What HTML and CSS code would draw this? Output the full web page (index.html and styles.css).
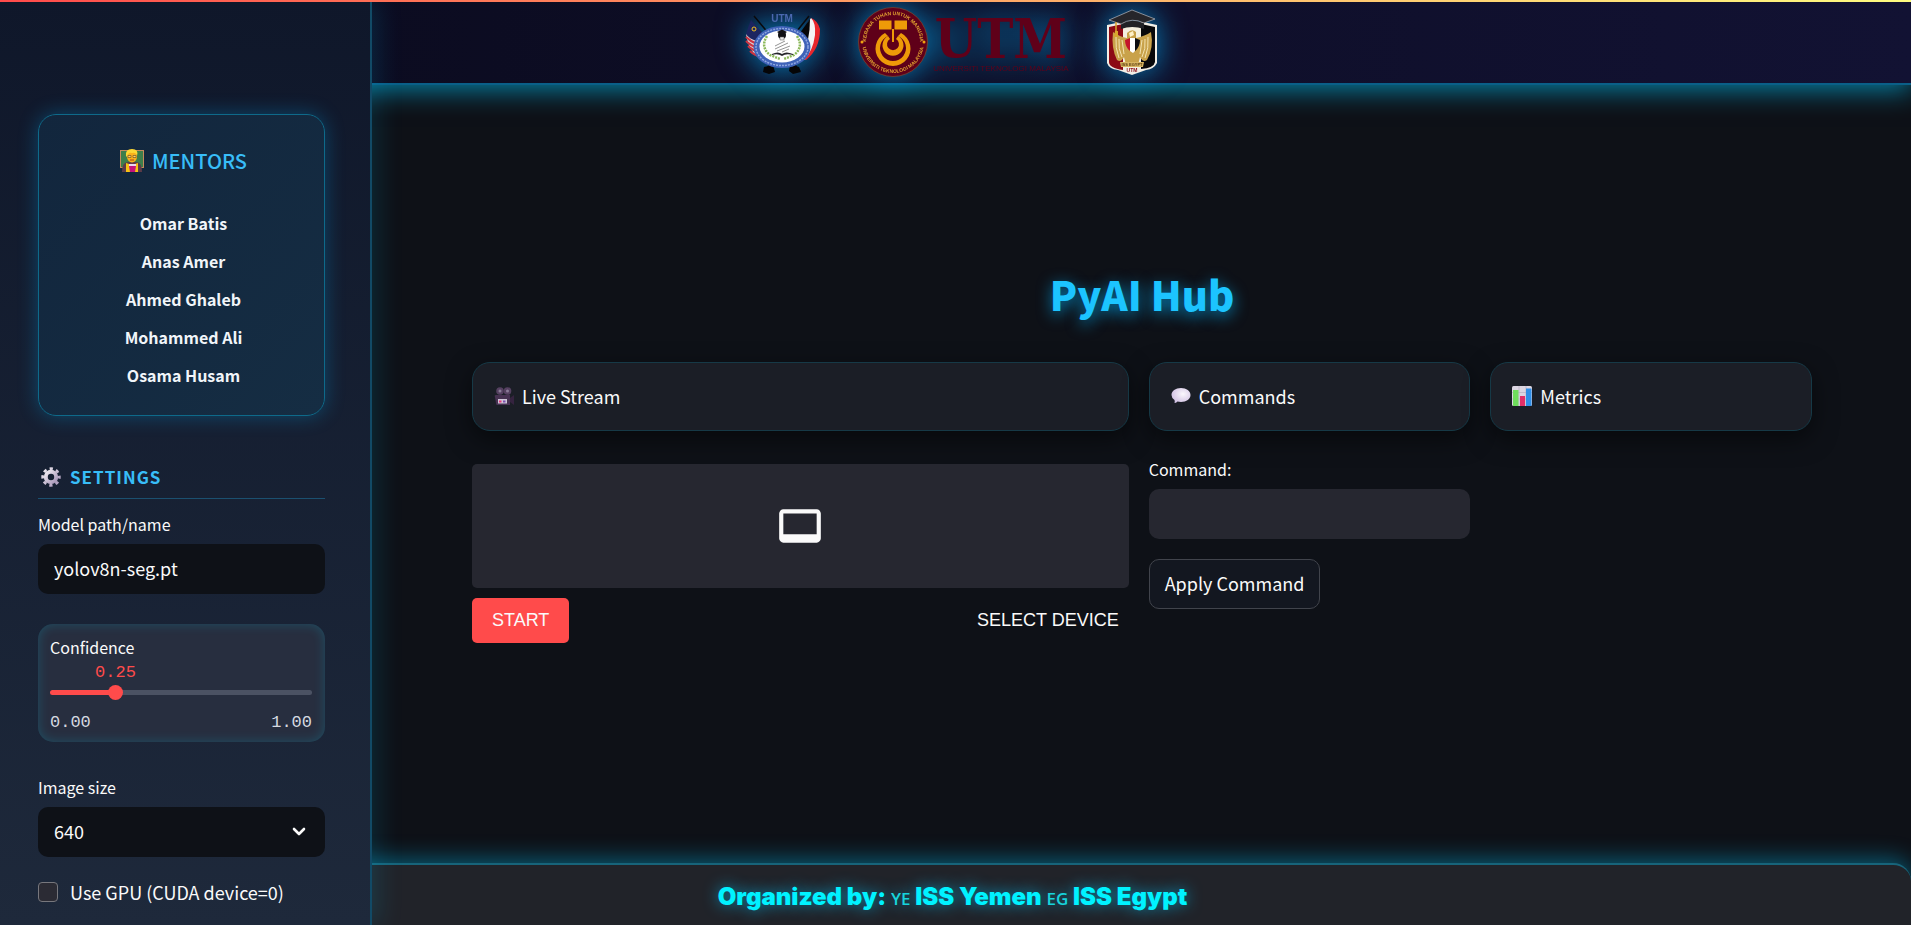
FILE: index.html
```
<!DOCTYPE html>
<html lang="en">

	<head>
		<meta charset="UTF-8">
		<title>PyAI Hub</title>
		<link rel="stylesheet" href="styles.css">
	</head>

	<body>
		<div class="stripe"></div>

		<header class="header">
			<svg class="logo" width="78" height="66" viewBox="0 0 78 66" role="img" aria-label="ISS Yemen UTM">
				<!-- flag poles -->
				<path d="M11 7 L57 62 M66 7 L22 62" stroke="#0a0a0c" stroke-width="1.5" />
				<path d="M21 58 L30 56 L32 63 L26 65 L20 63 Z M47 56 L56 58 L58 63 L50 65 L46 62 Z" fill="#050507" />
				<!-- left flag -->
				<path d="M8 11 Q14 18 19 23 L14 36 Q6 30 3 25 Q5 18 8 11 Z" fill="#1c2560" />
				<path d="M3 25 Q6 30 14 32 L19 51 Q6 44 3 25 Z" fill="#d8cdd4" />
				<path d="M3 28 Q8 33 14 35 M3 32 Q8 37 15 39 M5 37 Q9 41 16 43 M7 42 Q11 46 18 48" stroke="#cf3340" stroke-width="2" fill="none" />
				<circle cx="11" cy="20" r="2" fill="none" stroke="#f0c020" stroke-width="1" />
				<!-- right flag -->
				<path d="M68 9 Q75 12 77 20 Q77 40 63 51 L60 51 Q71 34 68 9 Z" fill="#e8262c" />
				<path d="M68 9 Q73 14 72 26 Q70 42 61 51 L57 48 Q65 32 64 15 Z" fill="#f4f4f4" />
				<path d="M67 10 Q67 33 59 46 L54 28 Z" fill="#060608" />
				<ellipse cx="39" cy="38" rx="28.500" ry="21" fill="#3f62b8" />
				<ellipse cx="39" cy="38" rx="26" ry="18.500" fill="none" stroke="#8ea7df" stroke-width="1.500" stroke-dasharray="2 1" />
				<ellipse cx="39" cy="37.500" rx="22.500" ry="16" fill="#fff" />
				<path d="M24 27 Q17 38 27 46 L37 50 M54 27 Q61 38 51 46 L41 50" fill="none" stroke="#8bb85a" stroke-width="2.500" stroke-dasharray="2 1" />
				<circle cx="39" cy="26" r="4" fill="#101014" />
				<path d="M34 23 L39 20.500 L44 23 L39 26 Z" fill="#101014" />
				<path d="M37 28 h4 v3 h-4 Z" fill="#e8e8e8" stroke="#555" stroke-width="0.500" />
				<path d="M32 37 L42 32 M32 40 L45 34 M34 42 L47 37 M39 43 L46 40" stroke="#777" stroke-width="0.800" />
				<path d="M29 45 Q35 42 39 45 Q43 42 50 45 L50 46 Q43 44 39 47 Q35 44 29 46 Z" fill="#26262c" />
				<text class="badge-text" x="39" y="13" text-anchor="middle">UTM</text>
			</svg>

			<svg class="logo" width="212" height="72" viewBox="0 0 212 72" role="img" aria-label="Universiti Teknologi Malaysia">
				<defs>
					<path id="ringTop" d="M9 36 A27 27 0 0 1 63 36" />
					<path id="ringBottom" d="M5 36 A31 31 0 0 0 67 36" />
				</defs>
				<circle cx="36" cy="36" r="34.500" fill="#5f0019" stroke="#8a4327" stroke-width="0.700" />
				<text class="ring-text" text-anchor="middle">
					<textPath href="#ringTop" startOffset="50%">KERANA TUHAN UNTUK MANUSIA</textPath>
				</text>
				<text class="ring-text" text-anchor="middle">
					<textPath href="#ringBottom" startOffset="50%">UNIVERSITI TEKNOLOGI MALAYSIA</textPath>
				</text>
				<circle cx="5" cy="36" r="1.500" fill="#f0a010" />
				<circle cx="67" cy="36" r="1.500" fill="#f0a010" />
				<path d="M22 14.500 h28 v9 h-28 Z" fill="#ee9a08" />
				<path d="M36 14 v19" stroke="#5f0019" stroke-width="3" />
				<path d="M36 23 v13" stroke="#ee9a08" stroke-width="2" />
				<path d="M28 27 A17.500 17.500 0 1 0 44 27 L41 30 A13 13 0 1 1 31 30 Z" fill="#ee9a08" />
				<path d="M31 30 A10.500 10.500 0 1 0 41 30 L39 33 A6 6 0 1 1 33 33 Z" fill="#ee9a08" />
				<text class="utm" x="144" y="52" text-anchor="middle">UTM</text>
				<text class="utm-sub" x="144" y="65" text-anchor="middle">UNIVERSITI TEKNOLOGI MALAYSIA</text>
			</svg>

			<svg class="logo" width="54" height="68" viewBox="0 0 54 68" role="img" aria-label="ISS Egypt UTM">
				<path d="M2 17 L16 14 H38 L52 17 V55 Q49 61 41 62 L27 67 L13 62 Q4 61 2 55 Z" fill="#f2eee6" />
				<path d="M4 19 L18 16 V62 Q4 60 4 54 Z" fill="#8c0a14" />
				<path d="M36 16 L50 19 V54 Q49 60 36 61 Z" fill="#08080a" />
				<path d="M18 18 h18 v42 h-18 Z" fill="#f4efdf" />
				<!-- eagle -->
				<path d="M22 25 Q27 20 31 24 L31 30 Q40 28 46 24 Q49 40 42 52 Q38 55 35 49 L33 57 H21 L19 49 Q16 55 12 52 Q6 40 8 24 Q15 29 22 30 Z" fill="#c9a24a" />
				<path d="M11 29 Q10 40 14 50 M14 31 Q13 41 17 49 M17 32 L19 46 M43 29 Q44 40 40 50 M40 31 Q41 41 37 49 M37 32 L35 46" stroke="#f3e3b0" stroke-width="1" fill="none" />
				<path d="M20 32 L25 30 V43 Q20 39 20 32 Z" fill="#c4142a" />
				<path d="M25 30 h5 v13 l-2 2 l-3 -2 Z" fill="#fff" />
				<path d="M30 30 L35 32 Q35 39 30 43 Z" fill="#0c0c10" />
				<path d="M15 54 H39 L38 59 H16 Z" fill="#d9b662" />
				<path d="M24 25 L28 23 L29 27 L25 29 Z" fill="#fff1c8" />
				<text class="crest-text" x="27" y="58" text-anchor="middle">ISS EGYPT</text>
				<text class="crest-utm" x="27" y="64" text-anchor="middle">UTM</text>
				<!-- graduation cap -->
				<path d="M16 15 Q27 10 39 15 V21 Q27 17 16 21 Z" fill="#222226" />
				<path d="M4 12 L27 2 L50 11 L39 15 Q27 9 16 16 Z" fill="#26262b" stroke="#b8b8bd" stroke-width="0.700" />
				<path d="M11 14 V26" stroke="#d9a52c" stroke-width="1.500" />
				<path d="M10 23 h3 v6 h-4 Z" fill="#d9a52c" />
			</svg>
		</header>

		<aside class="sidebar">
			<section class="mentors">
				<h3 class="mentors-title">
					<svg width="24" height="24" viewBox="0 0 24 24" aria-hidden="true">
						<path d="M0 1 h24 v18 h-24 Z" fill="#c58a5c" />
						<path d="M1 2 h22 v16 h-22 Z" fill="#3d7e4b" />
						<path d="M2 23 Q2 13 8 13 H16 Q22 13 22 23 Z" fill="#5c3b48" />
						<path d="M6 23 V14 L12 16 L18 14 V23 Z" fill="#f8c312" />
						<path d="M9 17 h7 l-1 6 h-5 Z" fill="#c4147c" />
						<path d="M9 15 h7 v2 h-7 Z" fill="#ead8f0" />
						<ellipse cx="12" cy="7.500" rx="5" ry="6" fill="#f9b11b" />
						<path d="M6 7 Q5 0 12 0 Q19 0 17 7 Q16 3 12 4 Q8 3 7 8 Z" fill="#fdd835" />
						<path d="M8 6.500 h3 v2 h-3 Z M13 6.500 h3 v2 h-3 Z" fill="#ffd869" stroke="#7a5528" stroke-width="0.700" />
						<path d="M10 11 h4" stroke="#a8421c" stroke-width="1" />
					</svg>
					MENTORS
				</h3>
				<ul class="mentors-list">
					<li>Omar Batis</li>
					<li>Anas Amer</li>
					<li>Ahmed Ghaleb</li>
					<li>Mohammed Ali</li>
					<li>Osama Husam</li>
				</ul>
			</section>

			<h3 class="settings-title">
				<svg width="20" height="20" viewBox="0 0 20 20" aria-hidden="true">
					<defs>
						<linearGradient id="gear" x1="0" y1="0" x2="1" y2="1">
							<stop offset="0" stop-color="#f0ecf2" />
							<stop offset="1" stop-color="#a795b8" />
						</linearGradient>
					</defs>
					<g stroke="url(#gear)" fill="none">
						<circle cx="10" cy="10" r="5.200" stroke-width="4" />
						<circle cx="10" cy="10" r="8.300" stroke-width="2.800" stroke-dasharray="3.300 3.219" stroke-dashoffset="1.650" />
					</g>
				</svg>
				SETTINGS
			</h3>

			<div class="field">
				<label for="model">Model path/name</label>
				<input class="control" type="text" id="model" value="yolov8n-seg.pt">
			</div>

			<div class="slider">
				<label for="confidence">Confidence</label>
				<div class="slider-value"><output for="confidence">0.25</output></div>
				<div class="track">
					<input type="range" id="confidence" min="0" max="1" step="0.01" value="0.25">
				</div>
				<div class="slider-range"><span>0.00</span><span>1.00</span></div>
			</div>

			<div class="field">
				<label for="size">Image size</label>
				<div class="select-wrap">
					<select class="control" id="size">
						<option>320</option>
						<option selected>640</option>
						<option>1280</option>
					</select>
					<svg class="chevron" width="14" height="10" viewBox="0 0 14 10" aria-hidden="true">
						<path d="M2 2 L7 7 L12 2" fill="none" stroke="#fafafa" stroke-width="2.600" stroke-linecap="round" stroke-linejoin="round" />
					</svg>
				</div>
			</div>

			<label class="check">
				<input type="checkbox">
				Use GPU (CUDA device=0)
			</label>
		</aside>

		<main class="main">
			<h1 class="title">PyAI Hub</h1>

			<div class="row">
				<section class="col wide">
					<h2 class="card">
						<svg width="20" height="20" viewBox="0 0 20 20" aria-hidden="true">
							<circle cx="6" cy="5" r="3.800" fill="#554060" />
							<circle cx="13.500" cy="5" r="3.800" fill="#554060" />
							<circle cx="6" cy="5" r="1.500" fill="#8b7c98" />
							<circle cx="13.500" cy="5" r="1.500" fill="#8b7c98" />
							<path d="M1 11 Q0 9 2 9 H16 V19 H3 Q2 19 2 17 Z" fill="#473252" />
							<path d="M16 12 L20 9 V19 L16 16 Z" fill="#35233f" />
							<path d="M4 13 h9 v4.500 h-9 Z" fill="#cfc6d8" />
							<path d="M5 14.500 h2.500 v2 h-2.500 Z" fill="#e8387a" />
							<path d="M9 14.500 h2.500 v2 h-2.500 Z" fill="#7b4fb0" />
						</svg>
						Live Stream
					</h2>
					<div class="video">
						<svg width="50" height="50" viewBox="0 0 24 24" aria-hidden="true">
							<path d="M20 4H4c-1 0-2 1-2 2v12c0 1 1 2 2 2h16c1 0 2-1 2-2V6c0-1-1-2-2-2zm0 12H4V6h16v10z" fill="#fafafa" />
						</svg>
					</div>
					<div class="stream-actions">
						<button class="start" type="button">START</button>
						<button class="device" type="button">SELECT DEVICE</button>
					</div>
				</section>

				<section class="col">
					<h2 class="card">
						<svg width="20" height="20" viewBox="0 0 20 20" aria-hidden="true">
							<defs>
								<radialGradient id="bubble" cx="0.6" cy="0.4" r="0.7">
									<stop offset="0" stop-color="#fbf8fd" />
									<stop offset="1" stop-color="#cdbbe0" />
								</radialGradient>
							</defs>
							<path d="M10 2 C15.500 2 19.500 5 19.500 9 C19.500 13 15.500 16 10 16 C8.500 16 7.500 15.800 6.500 15.500 Q5 17 3.500 17 Q4 15.500 3.500 14 Q0.500 12 0.500 9 C0.500 5 4.500 2 10 2 Z" fill="url(#bubble)" />
						</svg>
						Commands
					</h2>
					<div class="field command">
						<label for="command">Command:</label>
						<input class="control" type="text" id="command">
					</div>
					<button class="apply" type="button">Apply Command</button>
				</section>

				<section class="col">
					<h2 class="card">
						<svg width="20" height="20" viewBox="0 0 20 20" aria-hidden="true">
							<rect width="20" height="20" rx="1.500" fill="#dcd6e2" />
							<path d="M0 6.500 h20 M0 13 h20 M7 0 v20 M14 0 v20" stroke="#b9b0c4" stroke-width="0.700" />
							<path d="M1 4 h5.500 v16 h-5.500 Z" fill="#6fdc5c" />
							<path d="M8 10 h5 v10 h-5 Z" fill="#e22f68" />
							<path d="M14 2.500 h5.500 v17.500 h-5.500 Z" fill="#2f8fe8" />
						</svg>
						Metrics
					</h2>
				</section>
			</div>
		</main>

		<footer class="footer">
			<p>Organized by: <span>YE</span> ISS Yemen <span>EG</span> ISS Egypt</p>
		</footer>
	</body>

</html>
```
FILE: styles.css
```
* {
	box-sizing: border-box;
	padding: 0;
	margin: 0;
}

body {
	display: grid;
	grid-template-columns: 372px 1fr;
	grid-template-rows: 2px 83px 1fr auto;
	height: 100vh;
	overflow: hidden;
	background: #0e1117;
	color: #fafafa;
	font-family: "Noto Sans CJK SC", "Noto Sans", sans-serif;
	font-size: 18px;
	line-height: 28px;
}

input,
select,
button {
	font: inherit;
	color: inherit;
	border: none;
	outline: none;
}

.stripe {
	grid-column: 1 / -1;
	grid-row: 1;
	z-index: 4;
	background: linear-gradient(90deg, #ff4b4b, #fffd80);
}

/* header and footer run below the sidebar, so their content is centred on the window */
.header {
	grid-column: 1 / -1;
	grid-row: 2;
	z-index: 1;
	display: flex;
	justify-content: center;
	align-items: center;
	gap: 36px;
	padding: 0 10px 2px 0;
	border-bottom: 2px solid #0a5f88;
	background: linear-gradient(90deg, #0a0a1c, #121233);
	box-shadow: 0 5px 25px rgba(0, 200, 255, 0.6);
}

.logo {
	filter: drop-shadow(0 0 15px rgba(0, 180, 255, 0.7));
}

.badge-text {
	font: bold 10px "Liberation Sans", sans-serif;
	fill: #4a68b0;
}

.ring-text {
	font: bold 5px "Liberation Sans", sans-serif;
	fill: #e0a030;
}

.utm {
	font: bold 54px "DejaVu Serif Condensed", "Liberation Serif", serif;
	fill: #5f0019;
}

.utm-sub {
	font: 8px "Liberation Sans", sans-serif;
	fill: #5f0019;
}

.crest-text {
	font: bold 4px "Liberation Sans", sans-serif;
	fill: #5a3c10;
}

.crest-utm {
	font: bold 5px "Liberation Sans", sans-serif;
	fill: #8c0a14;
}

/* sidebar */
.sidebar {
	grid-column: 1;
	grid-row: 1 / -1;
	z-index: 2;
	padding: 114px 45px 0 38px;
	border-right: 2px solid #124a66;
	background: linear-gradient(180deg, #0f172a, #1e293b);
	box-shadow: 5px 0 25px rgba(0, 200, 255, 0.15);
}

.mentors {
	height: 302px;
	padding: 32px 0 0 4px;
	border: 1px solid #0e6a8a;
	border-radius: 18px;
	background: linear-gradient(135deg, #12263d, #152d43);
	box-shadow: 0 0 20px rgba(0, 180, 255, 0.3);
	text-align: center;
}

.mentors-title {
	display: flex;
	justify-content: center;
	align-items: center;
	gap: 8px;
	color: #38bdf8;
	font-size: 20px;
	font-weight: 500;
}

.mentors-list {
	margin-top: 29px;
	list-style: none;
	font-size: 16px;
	font-weight: 700;
	line-height: 38px;
	color: #f1f5f9;
}

.settings-title {
	display: flex;
	align-items: center;
	gap: 9px;
	margin: 44px 0 11px;
	padding: 3px 0 7px 3px;
	border-bottom: 1px solid #1b5070;
	color: #38bdf8;
	font-size: 17px;
	font-weight: 700;
	letter-spacing: 1px;
}

.field label,
.slider label {
	display: block;
	font-size: 16px;
}

.field label {
	margin-bottom: 6px;
}

.control {
	display: block;
	width: 100%;
	height: 50px;
	padding: 0 16px 2px;
	border-radius: 10px;
	background: #0e1117;
}

.slider {
	height: 118px;
	margin: 30px 0 31px;
	padding: 9px 13px 9px 12px;
	border-radius: 15px;
	background: #272e3f;
	box-shadow: inset 0 0 12px rgba(0, 220, 255, 0.2);
	font-family: "Liberation Mono", monospace;
	font-size: 17px;
}

.slider label {
	font-family: "Noto Sans CJK SC", "Noto Sans", sans-serif;
}

.slider-value {
	display: flex;
	width: 50%;
	justify-content: center;
	line-height: 24px;
	color: #ff4b4b;
}

.track {
	height: 5px;
	margin: 5px 0 14px;
	border-radius: 3px;
	background: linear-gradient(90deg, #ff4b4b 25%, #4b5263 25%);
}

.track input {
	display: block;
	width: calc(100% + 16px);
	height: 5px;
	margin: 0 -8px;
	background: none;
	-webkit-appearance: none;
	appearance: none;
}

.track input::-webkit-slider-thumb {
	width: 15px;
	height: 15px;
	border-radius: 50%;
	background: #ff4b4b;
	-webkit-appearance: none;
	appearance: none;
}

.slider-range {
	display: flex;
	justify-content: space-between;
	color: #d5d9e0;
}

.select-wrap {
	position: relative;
}

.select-wrap select {
	-webkit-appearance: none;
	appearance: none;
}

.chevron {
	position: absolute;
	top: 20px;
	right: 19px;
	pointer-events: none;
}

.check {
	display: flex;
	align-items: center;
	gap: 12px;
	margin-top: 21px;
}

.check input {
	width: 20px;
	height: 20px;
	border: 1px solid #77777d;
	border-radius: 4px;
	background: #2b2b34;
	-webkit-appearance: none;
	appearance: none;
}

/* main */
.main {
	grid-column: 2;
	grid-row: 3;
	padding: 182px 99px 0 100px;
}

.title {
	margin-bottom: 41px;
	text-align: center;
	font-size: 40px;
	font-weight: 900;
	line-height: 54px;
	color: #1cc4ff;
	text-shadow: 0 4px 15px rgba(0, 180, 255, 0.7);
}

.row {
	display: flex;
	gap: 20px;
}

.col {
	flex: 1 1 calc(25% - 20px);
}

.wide {
	flex-basis: calc(50% - 20px);
}

.card {
	display: flex;
	align-items: center;
	gap: 8px;
	height: 69px;
	padding: 0 21px 2px;
	border: 1px solid #163946;
	border-radius: 18px;
	background: #1b1e26;
	box-shadow: 0 8px 25px rgba(0, 0, 0, 0.5);
	font-size: 18px;
	font-weight: 400;
}

.video {
	display: flex;
	justify-content: center;
	align-items: center;
	height: 124px;
	margin: 33px 0 10px;
	border-radius: 5px;
	background: #262730;
}

.stream-actions {
	display: flex;
	justify-content: space-between;
	font-family: "Liberation Sans", Arial, sans-serif;
	font-size: 18px;
}

.stream-actions button {
	height: 45px;
	padding-bottom: 2px;
	border-radius: 5px;
}

.start {
	padding: 0 20px;
	background: #ff4b4b;
}

.device {
	padding: 0 10px;
	background: none;
}

.command {
	margin: 24px 0 20px;
}

.command .control {
	background: #262730;
}

.apply {
	height: 50px;
	padding: 0 15px 2px;
	border: 1px solid #41444c;
	border-radius: 10px;
	background: #131720;
}

/* footer */
.footer {
	grid-column: 1 / -1;
	grid-row: 4;
	z-index: 1;
	padding: 18px 6px 14px 0;
	border-top: 2px solid #17647a;
	border-radius: 0 18px 0 0;
	background: #212329;
	box-shadow: 0 -4px 22px rgba(0, 200, 255, 0.4);
	text-align: center;
	font-family: Inter, "Liberation Sans", sans-serif;
	font-size: 24px;
	font-weight: 900;
	color: #00f2ff;
	text-shadow: 0 0 15px rgba(0, 200, 255, 0.7);
}

.footer span {
	font-family: "Open Sans", "Noto Sans", sans-serif;
	font-size: 17px;
	font-weight: 600;
	line-height: 20px;
	color: #18d4dc;
}
```
